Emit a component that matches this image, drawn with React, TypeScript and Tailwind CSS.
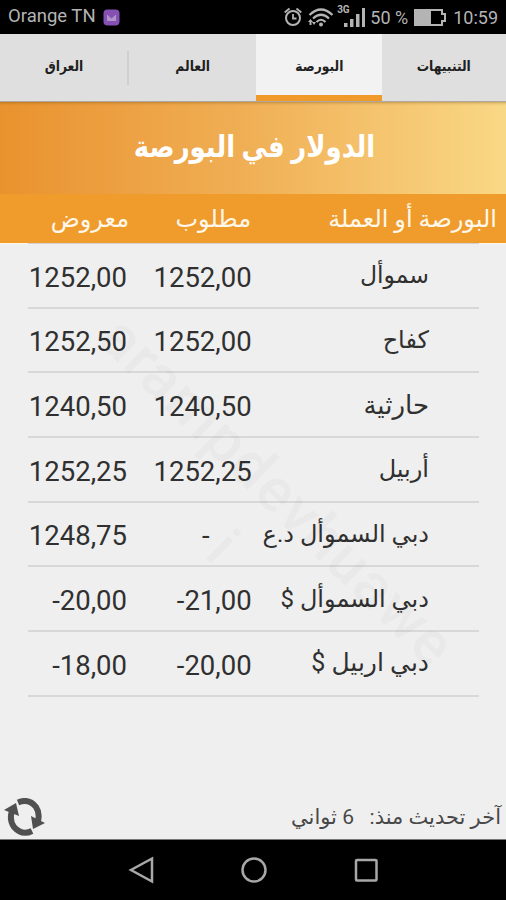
import type { ReactNode } from 'react';

interface Quote {
  name: string;
  bid: string;
  ask: string;
  size: string;
}

const quotes: Quote[] = [
  { name: 'سموأل', bid: '1252,00', ask: '1252,00', size: 'text-[23.500px]' },
  { name: 'كفاح', bid: '1252,00', ask: '1252,50', size: 'text-[24px]' },
  { name: 'حارثية', bid: '1240,50', ask: '1240,50', size: 'text-[26px]' },
  { name: 'أربيل', bid: '1252,25', ask: '1252,25', size: 'text-[24px]' },
  { name: 'دبي السموأل د.ع', bid: '-', ask: '1248,75', size: 'text-[24px]' },
  { name: 'دبي السموأل $', bid: '-21,00', ask: '-20,00', size: 'text-[24px]' },
  { name: 'دبي اربيل $', bid: '-20,00', ask: '-18,00', size: 'text-[25px]' },
];

function StatusBar() {
  return (
    <div className="flex h-[34px] items-center bg-black pl-[8px] pr-[8px] text-[17px] text-[#b4b4b4]">
      <span className="w-[91px] whitespace-nowrap text-[18.500px]">Orange TN</span>
      <svg className="ml-[4px]" width="17" height="17" viewBox="0 0 17 17">
        <rect x="0.5" y="0.5" width="16" height="16" rx="4" fill="#8450b4" />
        <path d="M3.5 4.5h10v8h-10z M4 5l4.500 4 4.500-4" fill="#b094c8" stroke="#8450b4" strokeWidth="1" />
      </svg>
      <svg className="ml-auto" width="18" height="20" viewBox="0 0 18 20" fill="none" stroke="#b4b4b4" strokeWidth="2">
        <circle cx="9" cy="11" r="7" />
        <path d="M9 7V11.500H12.500M0.700 5.500L5.500 1.500M17.300 5.500L12.500 1.500" strokeWidth="1.800" />
      </svg>
      <svg className="ml-[6px]" width="26" height="20" viewBox="0 0 26 20" fill="none" stroke="#b4b4b4" strokeWidth="2.200">
        <path d="M1.500 8Q13-3 24.500 8M5 11.500Q13 4 21 11.500M8.500 15Q13 10.500 17.500 15" />
        <circle cx="13" cy="17.500" r="2" fill="#b4b4b4" stroke="none" />
        <path d="M0 15l2.500-3 2.500 3H3.500v3H1.500v-3zM4 15h4l-2 3z" fill="#b4b4b4" stroke="none" />
      </svg>
      <div className="ml-[3px] flex h-[26px] items-start">
        <span className="w-[12px] text-[10px] font-bold leading-[11px] tracking-tight">3G</span>
        <svg className="-ml-[5px] mt-[4px]" width="22" height="19" viewBox="0 0 22 19" fill="#b4b4b4">
          <path d="M0 15h3.500v4H0zM6 11h3.500v8H6zM12 6h3.500v13H12zM18 0h3v19h-3z" />
        </svg>
      </div>
      <span className="ml-[4px] mt-px whitespace-nowrap text-[18px]">50 %</span>
      <svg className="ml-[6px]" width="33" height="17" viewBox="0 0 33 17">
        <path d="M1 1h27v4h3v7h-3v4H1z" fill="none" stroke="#b4b4b4" strokeWidth="2" />
        <rect x="2" y="2" width="15" height="13" fill="#b4b4b4" />
      </svg>
      <span className="ml-[6px] mt-px text-[18px]">10:59</span>
    </div>
  );
}

function Tab({ children, active }: { children: ReactNode; active?: boolean }) {
  return (
    <div
      className={
        active
          ? 'flex h-full items-center justify-center border-b-[6px] border-[#ef9a29] bg-[#f2f2f2] pt-[3px]'
          : 'flex h-full items-center justify-center pb-[3px]'
      }
    >
      <span className="scale-x-[0.88]">{children}</span>
    </div>
  );
}

function Watermark() {
  return (
    <div className="pointer-events-none absolute left-[-49px] top-[441px] w-[600px] rotate-[44.500deg] text-center text-[61px] font-medium leading-[78px] tracking-[1.500px] text-black/[0.025]">
      arampdevhuawe
      <br />i
    </div>
  );
}

export default function App() {
  return (
    <div
      dir="ltr"
      className="relative flex h-[900px] w-[506px] flex-col overflow-hidden bg-[#efefef] font-[Roboto,'DejaVu_Sans',sans-serif] text-[#303030]"
    >
      <StatusBar />

      <nav className="grid h-[67px] grid-cols-[127px_2px_127px_126px_124px] items-center bg-[#dfdfdf] text-[14px] font-bold text-[#202020]">
        <Tab>العراق</Tab>
        <div className="h-[34px] bg-[#d0d0d0]" />
        <Tab>العالم</Tab>
        <Tab active>البورصة</Tab>
        <Tab>التنبيهات</Tab>
      </nav>

      <div className="flex h-[93px] items-center justify-center border-t border-[#b0a8a0] bg-linear-to-r from-[#e9922d] via-[#f0b056] to-[#f9d885] pb-[4px] pl-[3px] text-[30px] font-bold text-white inset-shadow-[0_4px_3px_-3px_rgba(90,60,0,0.35)]">
        <h1 dir="rtl" className="scale-x-[0.865] whitespace-nowrap">الدولار في البورصة</h1>
      </div>

      <div dir="rtl" className="flex h-[49px] items-center bg-[#ef9c2d] pr-[9px] text-[24px] text-[#fff8ea]">
        <span className="w-[246px] whitespace-nowrap">البورصة أو العملة</span>
        <span className="w-[122px]">مطلوب</span>
        <span>معروض</span>
      </div>

      <Watermark />

      <div className="border-t border-[#fff6e4]">
        <div dir="rtl" className="-mt-px ml-[28px] mr-[27px] border-t border-[#d2d2d2]">
          {quotes.map((q) => (
            <div key={q.name} className="flex h-[64.700px] items-center border-b-2 border-[#d8d8d8] pr-[50px]">
              <span className={`w-[178px] whitespace-nowrap leading-[36px] ${q.size}`}>{q.name}</span>
              <div dir="ltr" className={q.bid === '-' ? 'w-[99px] pl-[7px] pt-[4px] text-center text-[27.500px]' : 'w-[99px] pt-[4px] text-right text-[27.500px]'}>
                {q.bid}
              </div>
              <div dir="ltr" className="mr-[26px] w-[99px] shrink-0 pt-[4px] text-right text-[27.500px]">{q.ask}</div>
            </div>
          ))}
        </div>
      </div>

      <div className="mt-auto flex h-[44px] items-center justify-between pl-[4px] pr-[5px]">
        <svg width="42" height="38" viewBox="0 0 42 38" fill="none" stroke="#505050" strokeWidth="6">
          <path d="M14 4.500Q25 0 32 9Q36 15 34 23" />
          <path d="M28 33Q18 38 10 29Q5 22 8 13" />
          <path d="M0 12L12 5L15 18zM41 25L29 31L27 18z" fill="#505050" stroke="none" />
        </svg>
        <span dir="rtl" className="whitespace-pre pt-[2px] text-[21px] text-[#484848]">آخر تحديث منذ:   6 ثواني</span>
      </div>

      <div className="flex h-[61px] items-center justify-center border-t border-[#777] bg-black">
        <svg width="250" height="30" viewBox="0 0 250 30" fill="none" stroke="#a8a8a8" strokeWidth="2.500">
          <path d="M24 3.500V26.500L3 15z" />
          <circle cx="126" cy="15" r="11.500" />
          <rect x="228" y="5" width="20.500" height="20.500" rx="1" />
        </svg>
      </div>
    </div>
  );
}
